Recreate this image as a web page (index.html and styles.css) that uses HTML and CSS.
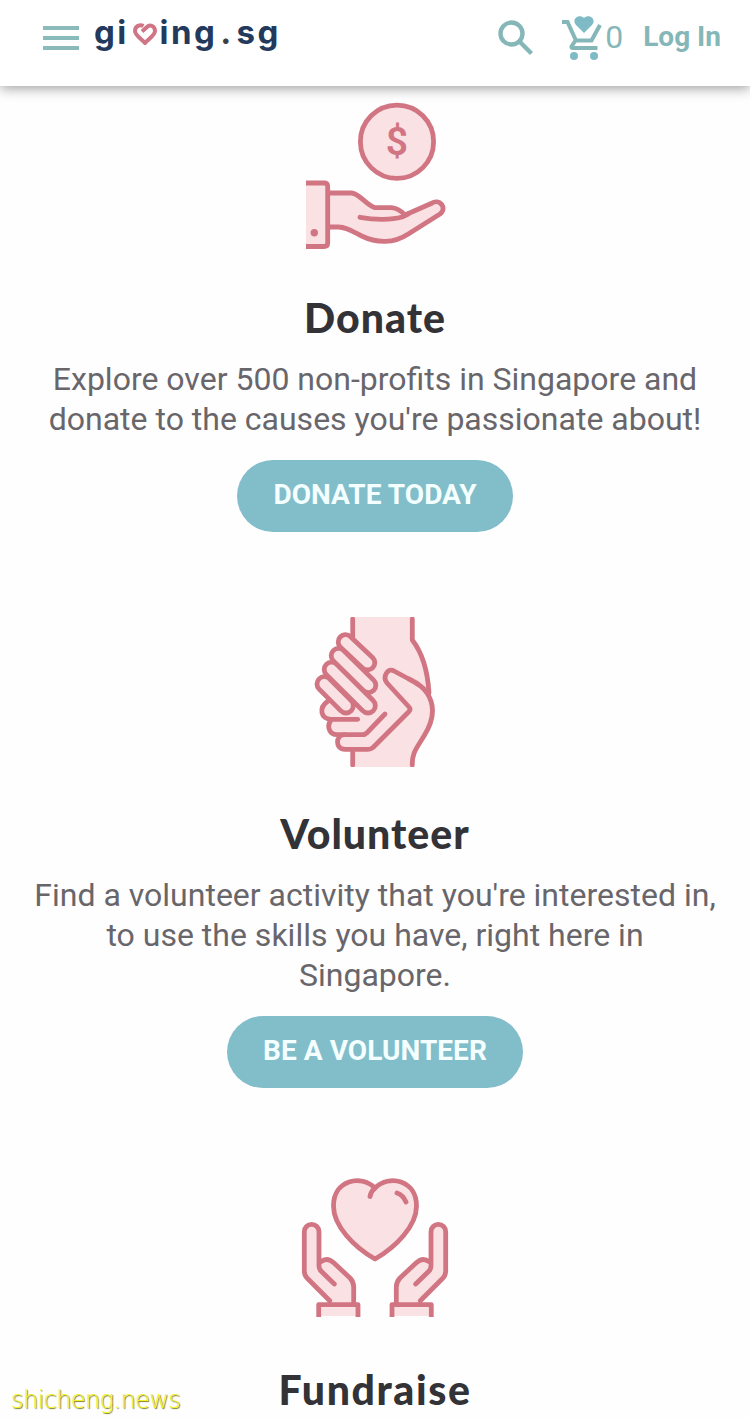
FILE: index.html
```html
<!DOCTYPE html>
<html lang="en">
<head>
    <meta charset="UTF-8">
    <meta name="viewport" content="width=device-width, initial-scale=1.0">
    <title>giving.sg</title>
    <link rel="stylesheet" href="styles.css">
</head>
<body>
    <header class="header">
        <div class="menu-btn">
            <span></span>
            <span></span>
            <span></span>
        </div>
        <div class="logo">
            <span class="logo-gi">gi</span>
            <svg class="logo-heart" width="24" height="24" viewBox="0 0 24 24">
                <path d="M9 9.5 L14 5 C17 2 22 4 22 9 C22 13 17 16 12 21 C7 16 2 13 2 9 C2 4 7 2 10.5 4"/>
            </svg>
            <span class="logo-ing">ing</span>
            <span class="logo-dot">.</span>
            <span class="logo-sg">sg</span>
        </div>
        <div class="header-right">
            <svg class="search-icon" width="36" height="36" viewBox="0 0 36 36">
                <circle cx="13.5" cy="13.5" r="11"/>
                <path d="M21.5 21.5 L33.5 33.5"/>
            </svg>
            <svg class="cart-icon" width="42" height="46" viewBox="0 0 42 46">
                <path class="cart-line" d="M1 7 H6.5 L15 25.5 H30.5 L39 10 M14.5 25.5 L10.5 31.5 Q10 33 12 33 H36.5"/>
                <circle cx="13" cy="41" r="4"/>
                <circle cx="33" cy="41" r="4"/>
                <path d="M23 18 L15 10 C10 4 18 -2 23 3 C28 -2 36 4 31 10 Z"/>
            </svg>
            <span class="cart-count">0</span>
            <span class="login">Log In</span>
        </div>
    </header>

    <main class="content">
        <section class="card">
            <svg class="card-icon" width="150" height="150" viewBox="0 0 150 150">
                <circle cx="97" cy="40.7" r="36.6"/>
                <text class="dollar" x="97" y="54">$</text>
                <path class="fill" d="M6 82 H28 V146 H6 Z"/>
                <path d="M29.7 92 H51.7 C60 93 66 104 75 106.7 H91.7 C97 107 101 110 105 114 L131.7 102.3 C139 97 148 107 140 113 L108.3 133 C94 142.5 77 142.5 61.7 135 C52 130 46 126 38.3 126 H29.7"/>
                <path class="line" d="M60 116.3 C75 119 92 119 102 116 L108 113"/>
                <path class="line butt" d="M6 82 H24 Q27.7 82 27.7 85.5 V142 Q27.7 145.5 24 145.5 H6"/>
                <circle class="dot" cx="14.3" cy="131.7" r="3.7"/>
            </svg>
            <h2>Donate</h2>
            <p>Explore over 500 non-profits in Singapore and<br>donate to the causes you're passionate about!</p>
            <a class="btn">DONATE TODAY</a>
        </section>

        <section class="card">
            <svg class="card-icon" width="150" height="150" viewBox="0 0 150 150">
                <path class="fill" d="M52.7 0 H112.3 V23 Q127 42 129 76 Q134 90 128 110 L113 138 V150 H52.7 Z"/>
                <path d="M28 83 C19 90 21 102 31 102.3 C26 109 29 117 37 117.7 C36 126 38 132.3 45 132.3 H71.7 L110 92.3 L86 66 Q83 54 91 53 L70 85 Z" class="fill"/>
                <path class="line" d="M112.3 148 C112 136 116 132 124 119 C134 103 135 88 127 76 C123 69 115 65 108 61.5 L94 54 C88 50 82 60 87 66 L109 90 Q111 92.3 109 94.5 L73 130.5 Q71 132.3 68 132.3 H45 C35 132.3 35 118 45 117.7"/>
                <path class="line" d="M112.3 2 V23 Q127 42 129 76 M52.7 2 V20 M52.7 133 V148"/>
                <path class="line" d="M28 84 C18 91 21 102.3 31 102.3 H57.7 M31 103 C26 110 30 117.7 37 117.7 H62 Q65 117.7 67 115.7 L85 97"/>
                <g class="fingers-outer">
                    <path d="M45.5 25 L67.5 45.7 M38.5 38.7 L68.5 68.3 M31.5 52.5 L68 88.7 M24.3 67 L46 88.7"/>
                </g>
                <g class="fingers-inner">
                    <path d="M45.5 25 L67.5 45.7 M38.5 38.7 L68.5 68.3 M31.5 52.5 L68 88.7 M24.3 67 L46 88.7"/>
                </g>
            </svg>
            <h2>Volunteer</h2>
            <p>Find a volunteer activity that you're interested in,<br>to use the skills you have, right here in<br>Singapore.</p>
            <a class="btn">BE A VOLUNTEER</a>
        </section>

        <section class="card">
            <svg class="card-icon" width="150" height="150" viewBox="0 2 150 150">
                <path d="M75 88 C54 76 33.5 55 33.5 35 C33.5 9 61 3 75 17 C89 3 116.5 9 116.5 35 C116.5 55 96 76 75 88 Z"/>
                <path class="line" d="M75 17 Q71 20 70 25.5 M97 22 Q103 24 106 31"/>
                <g id="hand">
                    <path class="fill" d="M29.7 129.7 L7 107 Q4.3 104 4.3 100 V60.7 A7.35 7.35 0 0 1 19 60.7 V91 Q27 85 34 92 L50 107 Q53.7 111 53.7 116 V133 H58 V145 H18.7 V133.7 H30 Z"/>
                    <path class="line" d="M29.7 129.7 L7 107 Q4.3 104 4.3 100 V60.7 A7.35 7.35 0 0 1 19 60.7 V95 Q19 98 21 100 L34.3 113 M21 90.7 Q27 85.5 34 92 L50 107 Q53.7 111 53.7 116 V133"/>
                    <path class="line butt" d="M18.7 146 V133.7 H58 V146"/>
                </g>
                <use href="#hand" transform="translate(150 0) scale(-1 1)"/>
            </svg>
            <h2 class="wide">Fundraise</h2>
        </section>
    </main>

    <div class="watermark">shicheng.news</div>
</body>
</html>
```

FILE: styles.css
```css
* {
    box-sizing: border-box;
}

body {
    margin: 0;
    position: relative;
    background: #fefefe;
    font-family: Roboto, "Liberation Sans", sans-serif;
}

/* Header */
.header {
    display: flex;
    align-items: flex-start;
    height: 86px;
    padding: 0 29px 0 43px;
    background: #fff;
    box-shadow: 0 2px 12px rgba(0, 0, 0, 0.4);
}

.menu-btn {
    display: flex;
    flex-direction: column;
    gap: 6px;
    width: 36px;
    margin: 26px 15px 0 0;
}

.menu-btn span {
    height: 4px;
    background: #8abab9;
}

.logo {
    display: flex;
    height: 60px;
    font-family: Inter, sans-serif;
    font-weight: 700;
    font-size: 33px;
    line-height: 64px;
    letter-spacing: 2.4px;
    color: #233a5c;
}

.logo-heart {
    margin: 22px 3px 0 4px;
    fill: none;
    stroke: #cf7585;
    stroke-width: 4;
    stroke-linejoin: round;
}

.logo-dot {
    margin: 0 3px;
    color: #3d3f45;
}

.header-right {
    display: flex;
    margin-left: auto;
    color: #86b7b8;
}

.search-icon {
    margin: 20px 27px 0 0;
    fill: none;
    stroke: #86b7b8;
    stroke-width: 4.4;
}

.cart-icon {
    margin: 15px 2px 0 0;
    fill: #7fbbc6;
}

.cart-line {
    fill: none;
    stroke: #86b7b8;
    stroke-width: 4;
}

.cart-count {
    margin-right: 20px;
    font-size: 32px;
    line-height: 74px;
}

.login {
    font-size: 28px;
    font-weight: 700;
    line-height: 74px;
}

/* Cards */
.content {
    padding-top: 15px;
}

.card {
    display: flex;
    flex-direction: column;
    align-items: center;
    margin-bottom: 85px;
    text-align: center;
}

.card:last-child {
    margin-bottom: 0;
}

.card-icon {
    fill: #f9e1e4;
    stroke: #d27583;
    stroke-width: 4.8;
    stroke-linecap: round;
    stroke-linejoin: round;
}

.card-icon .fill {
    stroke: none;
}

.card-icon .line {
    fill: none;
}

.card-icon .butt {
    stroke-linecap: butt;
}

.card-icon .dot {
    fill: #d27583;
    stroke: none;
}

.dollar {
    font-size: 39px;
    font-weight: 600;
    text-anchor: middle;
    fill: #d27583;
    stroke: none;
}

.card-icon .fingers-outer {
    stroke-width: 19.4;
}

.card-icon .fingers-inner {
    stroke: #f9e1e4;
    stroke-width: 9.8;
}

.card h2 {
    margin: 42px 0 16px;
    font-family: Lato, sans-serif;
    font-size: 41px;
    font-weight: 900;
    line-height: 50px;
    letter-spacing: 1px;
    color: #333236;
}

.card h2.wide {
    margin-bottom: 0;
    letter-spacing: 1.6px;
}

.card p {
    margin: 0 0 21px;
    font-size: 32px;
    line-height: 40px;
    color: #69666b;
    white-space: nowrap;
}

.btn {
    height: 72px;
    padding: 0 36px;
    border-radius: 36px;
    background: #82bdca;
    color: #f4ffff;
    font-size: 28px;
    font-weight: 700;
    line-height: 70px;
    letter-spacing: 0.05px;
}

.watermark {
    position: absolute;
    left: 11px;
    top: 1384px;
    font-family: "DejaVu Sans", sans-serif;
    font-weight: 200;
    font-size: 24px;
    line-height: 32px;
    letter-spacing: -0.6px;
    color: #f4f32a;
    text-shadow: 1px 1px 1px #77771c;
}
```
